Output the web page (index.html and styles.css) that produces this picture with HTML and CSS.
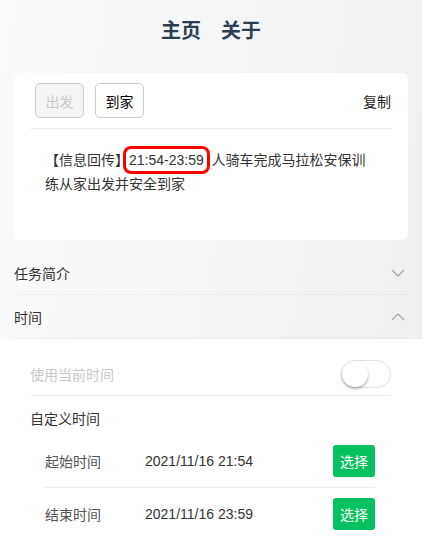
FILE: index.html
```html
<!DOCTYPE html>
<html lang="zh-CN">
<head>
    <meta charset="UTF-8">
    <meta name="viewport" content="width=device-width, initial-scale=1.0">
    <title>信息回传</title>
    <link rel="stylesheet" href="styles.css">
</head>
<body>
    <div class="nav">
        <a href="#">主页</a>
        <a href="#">关于</a>
    </div>

    <div class="card">
        <div class="card-bar">
            <div class="btns">
                <button class="btn" disabled>出发</button>
                <button class="btn">到家</button>
            </div>
            <span class="copy">复制</span>
        </div>
        <p class="msg">【信息回传】<span class="hl">21:54-23:59</span> 人骑车完成马拉松安保训练从家出发并安全到家</p>
    </div>

    <!-- 折叠面板 -->
    <div class="folds">
        <div class="fold">
            <span>任务简介</span>
            <svg class="arrow" width="14" height="8" viewBox="0 0 14 8"><path d="M1 1l6 6 6-6" fill="none" stroke="#a8a8a8" stroke-width="1.3"/></svg>
        </div>
        <div class="fold">
            <span>时间</span>
            <svg class="arrow" width="14" height="8" viewBox="0 0 14 8"><path d="M1 7l6-6 6 6" fill="none" stroke="#a8a8a8" stroke-width="1.3"/></svg>
        </div>
    </div>

    <div class="panel">
        <div class="switch-row">
            <span class="muted">使用当前时间</span>
            <div class="toggle"><span class="knob"></span></div>
        </div>
        <div class="sub-title">自定义时间</div>
        <div class="time-list">
            <div class="time-row">
                <span class="time-label">起始时间</span>
                <span class="time-value">2021/11/16 21:54</span>
                <button class="pick">选择</button>
            </div>
            <div class="time-row">
                <span class="time-label">结束时间</span>
                <span class="time-value">2021/11/16 23:59</span>
                <button class="pick">选择</button>
            </div>
        </div>
    </div>
</body>
</html>
```

FILE: styles.css
```css
body {
    font-family: "Liberation Sans", "Noto Sans CJK SC", sans-serif;
    font-size: 14px;
    color: #333;
    margin: 0;
    background: linear-gradient(100deg, #fbfbfb 0%, #eceef0 100%);
    min-height: 100vh;
}
.nav {
    display: flex;
    justify-content: center;
    gap: 20px;
    padding: 20px 0 0;
    margin-bottom: 31px;
    line-height: 22px;
}
.nav a {
    font-size: 20px;
    font-weight: bold;
    color: #2c3e50;
    text-decoration: none;
}
.card {
    margin: 0 14px;
    padding: 10px 16px 44px;
    background-color: #fff;
    border-radius: 6px;
}
.card-bar {
    display: flex;
    justify-content: space-between;
    align-items: center;
    padding: 0 1px 10px 5px;
    border-bottom: 1px solid #eee;
}
.btns {
    display: flex;
    gap: 11px;
}
.btn {
    width: 49px;
    height: 35px;
    padding: 0;
    font-family: inherit;
    font-size: 14px;
    color: #000;
    background-color: #fff;
    border: 1px solid #ccc;
    border-radius: 5px;
}
.btn:disabled {
    color: #c8c8c8;
    background-color: #f4f4f4;
}
.copy {
    color: #222;
}
.msg {
    margin: 0;
    padding: 19px 20px 0 15px;
    line-height: 24px;
    color: #333;
}
.hl {
    margin-right: 4px;
    outline: 3px solid #f00;
    outline-offset: 3px;
    border-radius: 2px;
}
.folds {
    margin: 11px 14px 0;
}
.fold {
    display: flex;
    justify-content: space-between;
    align-items: center;
    height: 43px;
    padding-right: 3px;
    border-bottom: 1px solid rgba(0, 0, 0, 0.04);
}
.panel {
    background-color: #fff;
    padding: 0 31px 20px 30px;
}
.switch-row {
    display: flex;
    justify-content: space-between;
    align-items: center;
    padding: 21px 0 7px;
    border-bottom: 1px solid #eee;
}
.muted {
    color: #c8c8c8;
}
.toggle {
    width: 48px;
    height: 26px;
    border: 1px solid #e2e2e2;
    border-radius: 14px;
    display: flex;
    align-items: center;
}
.knob {
    width: 26px;
    height: 26px;
    border-radius: 50%;
    background-color: #fff;
    box-shadow: 0 2px 3px rgba(0, 0, 0, 0.3);
}
.sub-title {
    margin-top: 13px;
    line-height: 20px;
    color: #333;
}
.time-list {
    padding: 6px 16px 0 15px;
}
.time-row {
    display: flex;
    align-items: center;
    padding: 10px 0;
    border-bottom: 1px solid #eee;
}
.time-row:last-child {
    border-bottom: none;
}
.time-label {
    width: 100px;
    color: #555;
}
.time-value {
    flex: 1;
    color: #333;
}
.pick {
    width: 42px;
    height: 32px;
    padding: 0;
    font-family: inherit;
    font-size: 14px;
    color: #fff;
    background-color: #07c160;
    border: none;
    border-radius: 3px;
}
```
